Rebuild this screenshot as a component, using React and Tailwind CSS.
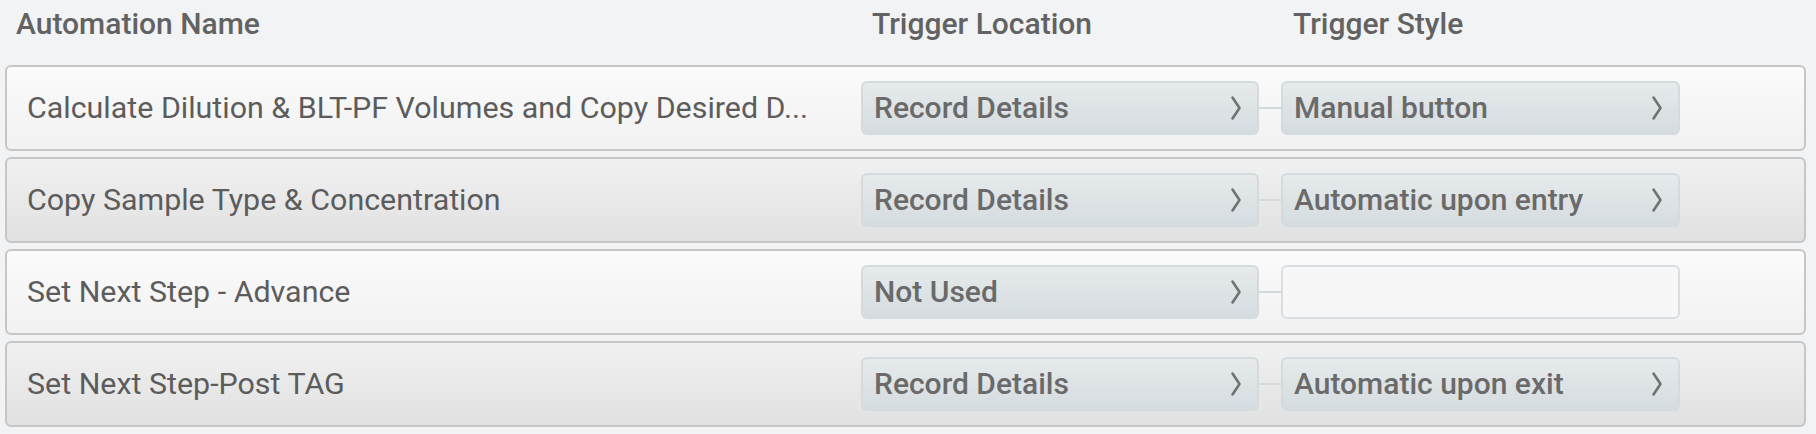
import React from "react";

const rows = [
  { name: "Calculate Dilution & BLT-PF Volumes and Copy Desired D...", loc: "Record Details", style: "Manual button", alt: false },
  { name: "Copy Sample Type & Concentration", loc: "Record Details", style: "Automatic upon entry", alt: true },
  { name: "Set Next Step - Advance", loc: "Not Used", style: null, alt: false },
  { name: "Set Next Step-Post TAG", loc: "Record Details", style: "Automatic upon exit", alt: true },
];

function Chevron() {
  return (
    <svg width="14" height="26" viewBox="0 0 14 26" fill="none">
      <polyline points="3.5,2.5 10.5,13 3.5,23.5" stroke="#727272" strokeWidth="2.6" strokeLinecap="round" strokeLinejoin="round" />
    </svg>
  );
}

function Pill({ label, w }) {
  return (
    <div
      className={`${w} h-[54px] rounded-[6px] border-2 border-[#d4dbdf] bg-gradient-to-b from-[#e6eaec] to-[#d5dcdf] flex items-center justify-between pl-[11px] pr-[14px]`}
    >
      <span className="text-[30px] font-medium text-[#6a6a6a] leading-[36px] whitespace-nowrap">{label}</span>
      <Chevron />
    </div>
  );
}

export default function App() {
  return (
    <div className="w-[1816px] h-[434px] bg-[#f2f3f5] overflow-hidden" style={{ fontFamily: "Roboto, 'Noto Sans', sans-serif" }}>
      <div className="h-[47px] mb-[18px] flex items-center text-[30px] font-medium text-[#626262] leading-[36px] whitespace-nowrap">
        <div className="w-[872px] pl-[16px]">Automation Name</div>
        <div className="w-[421px]">Trigger Location</div>
        <div>Trigger Style</div>
      </div>
      <div className="flex flex-col gap-[6px]">
        {rows.map((r, i) => (
          <div
            key={i}
            className={`ml-[5px] w-[1801px] h-[86px] rounded-[6px] border-2 border-[#c6c6c6] flex items-center pl-[20px] bg-gradient-to-b ${
              r.alt ? "from-[#f1f1f1] to-[#e1e1e1]" : "from-[#fbfbfb] to-[#f1f1f1]"
            }`}
          >
            <div className="w-[834px] text-[30.4px] text-[#5c5c5c] whitespace-nowrap leading-[38px]">
              {r.name}
            </div>
            <Pill label={r.loc} w="w-[398px]" />
            <div className="w-[22px] h-[2px] bg-[#d3dadd]" />
            {r.style ? (
              <Pill label={r.style} w="w-[399px]" />
            ) : (
              <div className="w-[399px] h-[54px] rounded-[6px] border-2 border-[#d8dee1] bg-[#f7f7f7]" />
            )}
          </div>
        ))}
      </div>
    </div>
  );
}
